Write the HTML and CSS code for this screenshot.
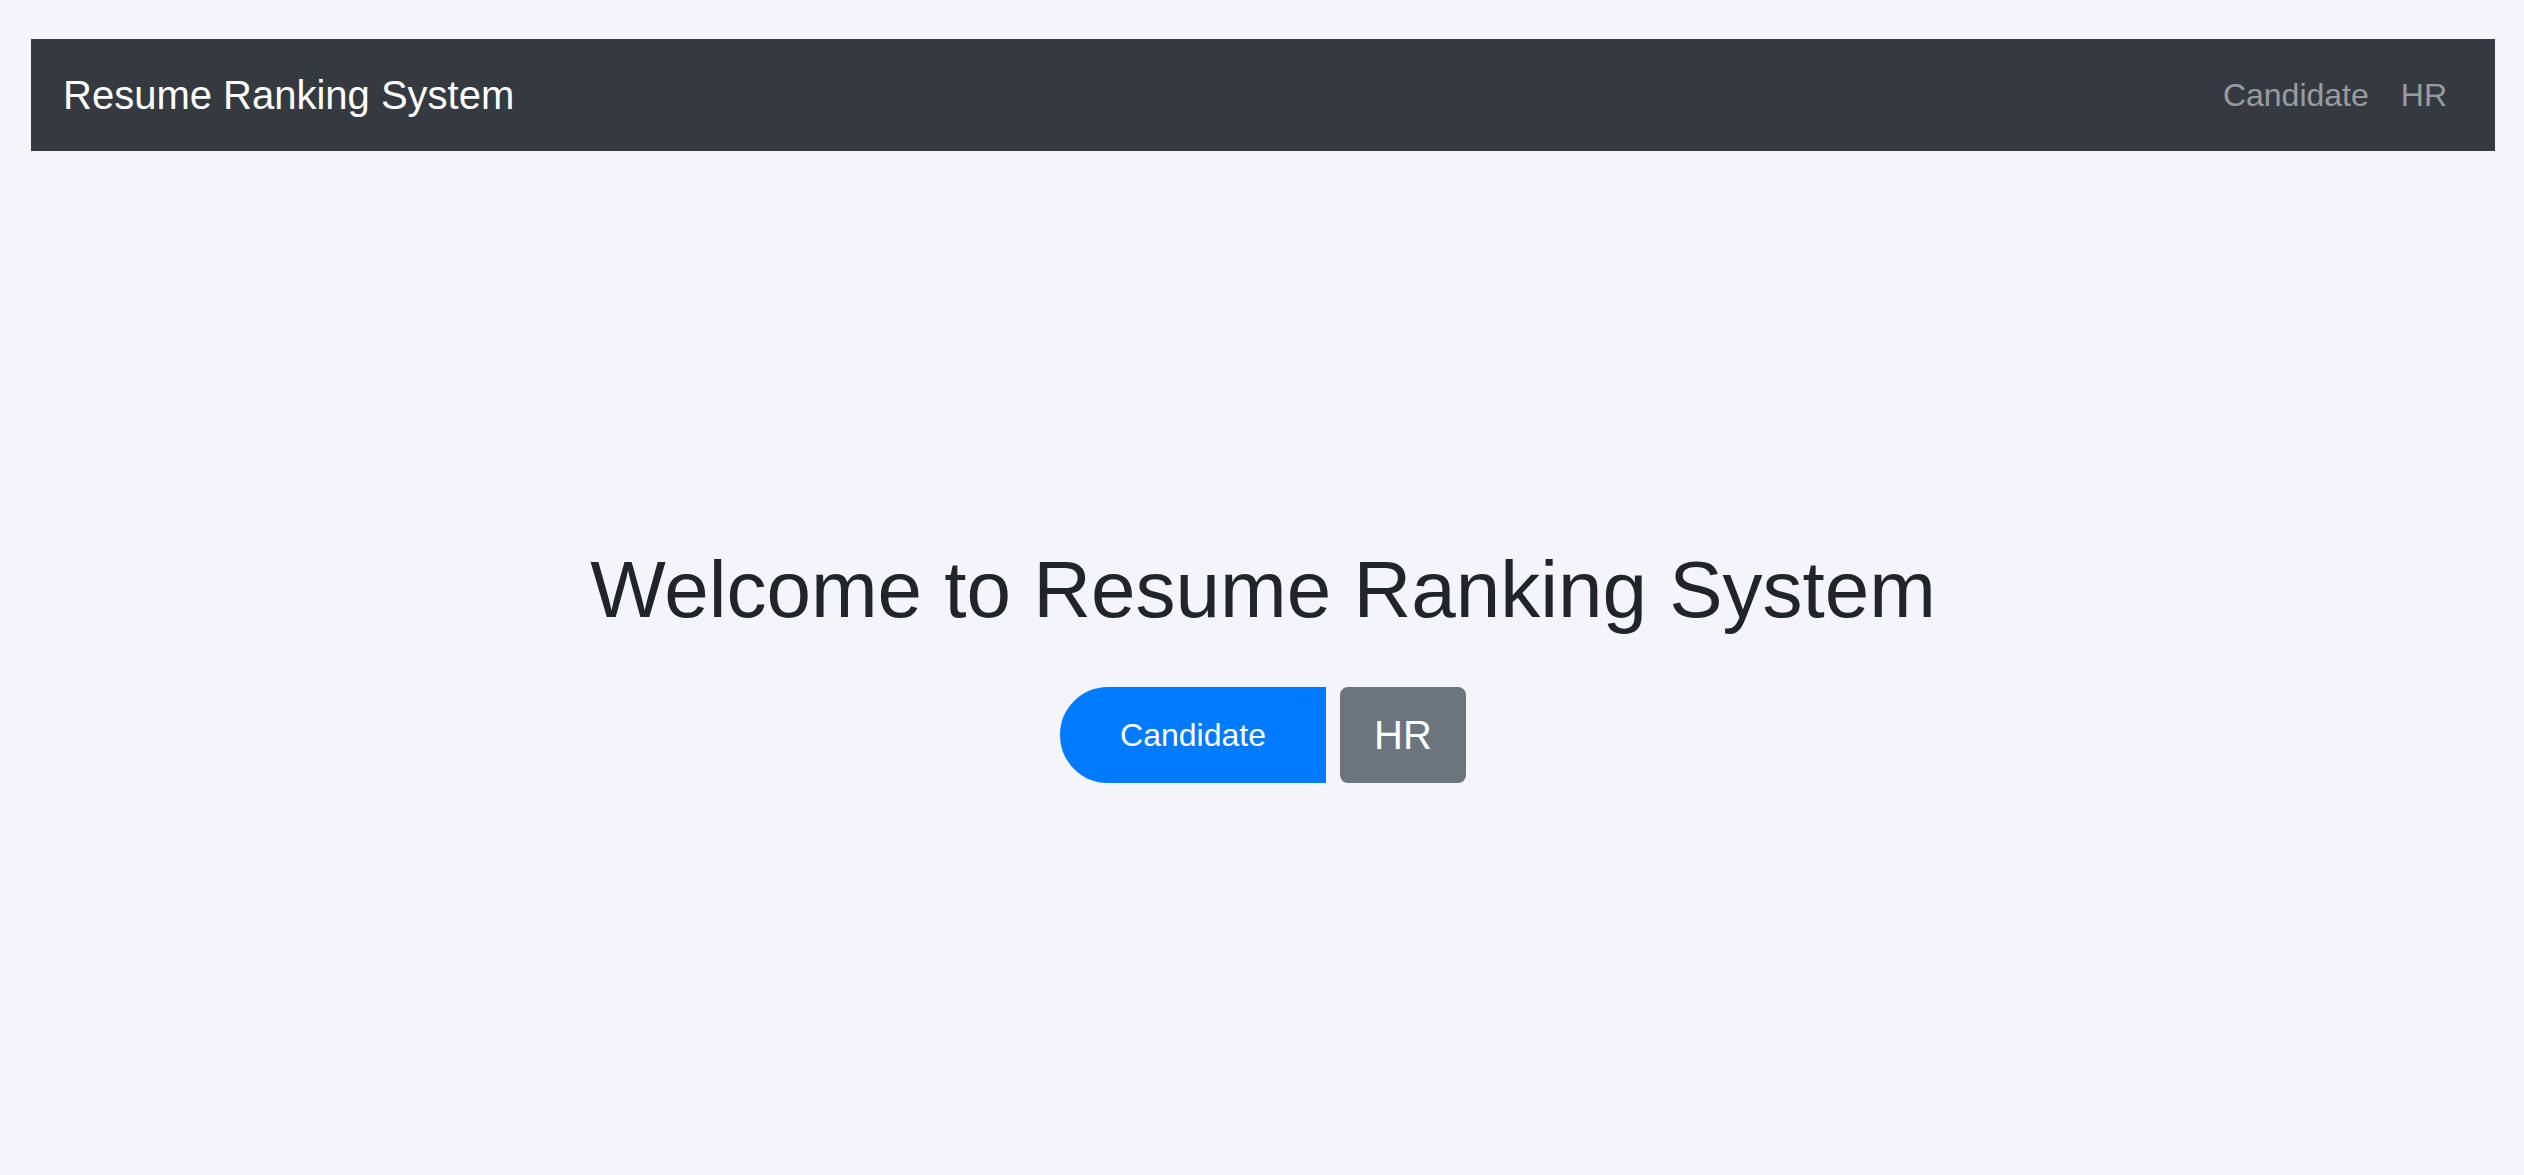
FILE: index.html
```html
<!DOCTYPE html>
<html lang="en">
<head>
<meta charset="utf-8">
<title>Resume Ranking System</title>
<link rel="stylesheet" href="styles.css">
</head>
<body>
<div class="page">
  <nav class="navbar">
    <a class="brand" href="#">Resume Ranking System</a>
    <ul class="nav">
      <li><a class="nav-link" href="#">Candidate</a></li>
      <li><a class="nav-link" href="#">HR</a></li>
    </ul>
  </nav>
  <main class="hero">
    <h1 class="title">Welcome to Resume Ranking System</h1>
    <div class="actions">
      <a class="btn btn-primary" href="#">Candidate</a>
      <a class="btn btn-secondary" href="#">HR</a>
    </div>
  </main>
</div>
</body>
</html>
```

FILE: styles.css
```css
* { box-sizing: border-box; }
html, body {
  margin: 0;
  padding: 0;
  height: 100%;
}
body {
  background: #f4f4f9;
  font-family: "Liberation Sans", Arial, sans-serif;
  color: #212529;
  overflow: hidden;
}
.page {
  height: 1175px;
  display: flex;
  flex-direction: column;
  padding: 39px 29px 0 31px;
}
.navbar {
  background: #343a40;
  height: 112px;
  padding: 16px 32px;
  display: flex;
  align-items: center;
  justify-content: space-between;
  flex-shrink: 0;
}
.brand {
  color: #fff;
  text-decoration: none;
  font-size: 40px;
  line-height: 60px;
  padding: 10px 0;
}
.nav {
  list-style: none;
  margin: 0;
  padding: 0;
  display: flex;
}
.nav-link {
  display: block;
  color: rgba(255, 255, 255, 0.5);
  text-decoration: none;
  font-size: 32px;
  line-height: 48px;
  padding: 16px 16px;
}
.hero {
  flex: 1;
  display: flex;
  flex-direction: column;
  align-items: center;
  justify-content: center;
  padding-bottom: 2px;
}
.title {
  margin: 0 0 49px;
  font-size: 80px;
  font-weight: 400;
  line-height: 96px;
  color: #212529;
}
.actions {
  display: flex;
  gap: 14px;
}
.btn {
  display: block;
  height: 96px;
  color: #fff;
  text-decoration: none;
  text-align: center;
  border: 2px solid transparent;
}
.btn-primary {
  background: #007bff;
  border-color: #007bff;
  width: 266px;
  font-size: 32px;
  line-height: 92px;
  border-radius: 48px 0 0 48px;
}
.btn-secondary {
  background: #6c757d;
  border-color: #6c757d;
  width: 126px;
  font-size: 40px;
  line-height: 92px;
  border-radius: 8px;
}
```
